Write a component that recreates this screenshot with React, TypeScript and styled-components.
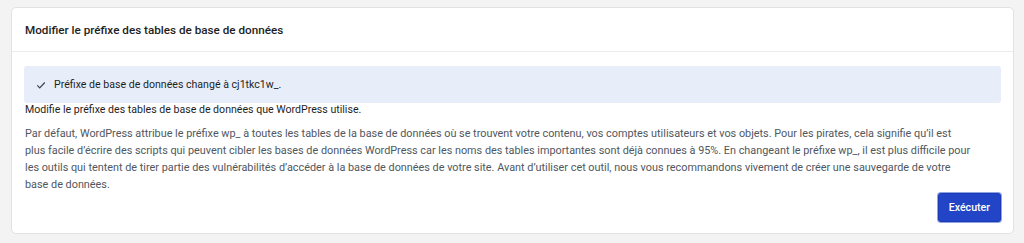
import React from "react";
import styled, { createGlobalStyle } from "styled-components";

const GlobalStyle = createGlobalStyle`
  html, body {
    margin: 0;
    padding: 0;
    background: #f3f3f3;
    font-family: Roboto, "Liberation Sans", Arial, sans-serif;
    -webkit-font-smoothing: antialiased;
  }
`;

const Page = styled.div`
  padding: 7px 10px 10px 11px;
`;

const Card = styled.section`
  background: #fff;
  border: 1px solid #e2e2e2;
  border-radius: 5px;
  box-sizing: border-box;
  height: 227px;
  display: flex;
  flex-direction: column;
`;

const Header = styled.header`
  height: 43px;
  display: flex;
  align-items: center;
  padding: 0 13px;
  border-bottom: 1px solid #ececec;
  & > h2 {
    margin: 0;
    font-size: 11.7px;
    font-weight: 500;
    color: #1e1e1e;
  }
`;

const Body = styled.div`
  flex: 1;
  display: flex;
  flex-direction: column;
  padding: 14px 12px 11px 12px;
`;

const Notice = styled.div`
  height: 37px;
  background: #e8eef9;
  border-radius: 3px;
  display: flex;
  align-items: center;
  gap: 8px;
  padding: 0 12px;
  font-size: 10.6px;
  color: #1e1e1e;
`;

const Intro = styled.p`
  margin: 0;
  padding: 0 1px;
  line-height: 14px;
  font-size: 10.6px;
  color: #1e1e1e;
`;

const Description = styled.p`
  margin: 8px 0 0;
  padding: 0 1px;
  white-space: nowrap;
  font-size: 10.85px;
  line-height: 17px;
  color: #50575e;
`;

const Footer = styled.div`
  margin-top: auto;
  display: flex;
  justify-content: flex-end;
`;

const Button = styled.button`
  height: 29px;
  padding: 0 10px;
  border: 1px solid #1d3bb4;
  border-radius: 3px;
  background: #2145c6;
  box-shadow: 0 0 0 1px #8ea2e6;
  color: #fff;
  font-family: inherit;
  font-size: 10.6px;
  font-weight: 500;
`;

const Check = () => (
  <svg width="10" height="10" viewBox="0 0 12 12" fill="none">
    <path d="M1.5 6.5 L4.5 9.5 L10.5 3" stroke="#3c434a" strokeWidth="1.4" />
  </svg>
);

export default function App() {
  return (
    <>
      <GlobalStyle />
      <Page>
        <Card>
          <Header>
            <h2>Modifier le préfixe des tables de base de données</h2>
          </Header>
          <Body>
            <Notice>
              <Check />
              <span>Préfixe de base de données changé à cj1tkc1w_.</span>
            </Notice>
            <Intro>Modifie le préfixe des tables de base de données que WordPress utilise.</Intro>
            <Description>
              Par défaut, WordPress attribue le préfixe wp_ à toutes les tables de la base de données où se trouvent
              votre contenu, vos comptes utilisateurs et vos objets. Pour les pirates, cela signifie qu’il est
              <br />
              plus facile d’écrire des scripts qui peuvent cibler les bases de données WordPress car les noms des
              tables importantes sont déjà connues à 95%. En changeant le préfixe wp_, il est plus difficile pour
              <br />
              les outils qui tentent de tirer partie des vulnérabilités d’accéder à la base de données de votre site.
              Avant d’utiliser cet outil, nous vous recommandons vivement de créer une sauvegarde de votre
              <br />
              base de données.
            </Description>
            <Footer>
              <Button>Exécuter</Button>
            </Footer>
          </Body>
        </Card>
      </Page>
    </>
  );
}
